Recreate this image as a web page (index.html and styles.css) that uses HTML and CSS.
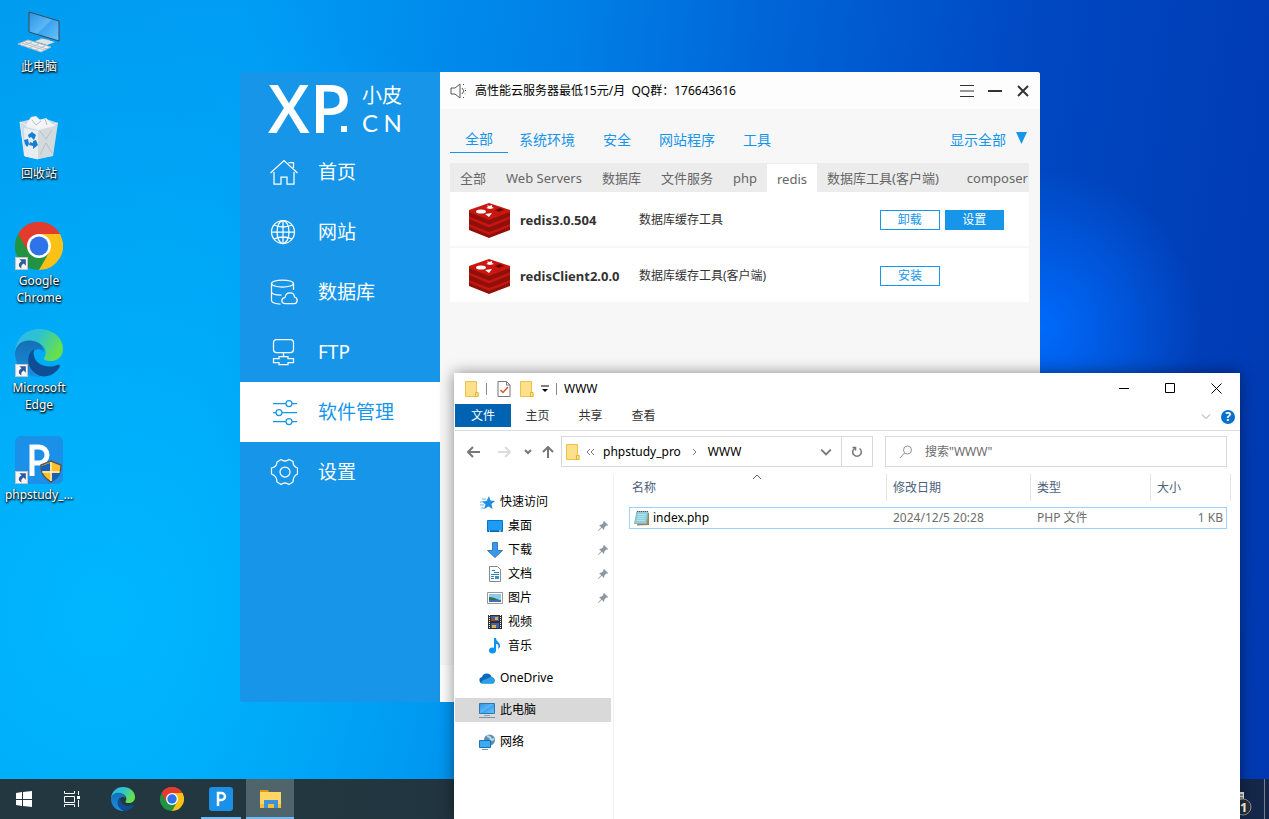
FILE: index.html
```html
<!DOCTYPE html>
<html lang="zh-CN">
<head>
    <meta charset="UTF-8">
    <meta name="viewport" content="width=device-width, initial-scale=1.0">
    <title>WWW</title>
    <link rel="stylesheet" href="styles.css">
</head>
<body>
    <!-- shared icons -->
    <svg class="sprite" aria-hidden="true">
        <defs>
            <linearGradient id="edge-top" x1="0" y1="0" x2="1" y2="0.4">
                <stop offset="0" stop-color="#35b5f0"/>
                <stop offset="0.5" stop-color="#2bc3d0"/>
                <stop offset="1" stop-color="#66e04e"/>
            </linearGradient>
            <linearGradient id="edge-mid" x1="0.3" y1="0" x2="0.3" y2="1">
                <stop offset="0" stop-color="#156fb5"/>
                <stop offset="1" stop-color="#1a8fe3"/>
            </linearGradient>
            <linearGradient id="screen" x1="0" y1="0" x2="1" y2="1">
                <stop offset="0" stop-color="#2a92e2"/>
                <stop offset="0.5" stop-color="#5cb8f7"/>
                <stop offset="0.52" stop-color="#3ba3f1"/>
                <stop offset="1" stop-color="#6cc3fa"/>
            </linearGradient>
        </defs>
        <symbol id="chrome" viewBox="0 0 48 48">
            <path d="M24 24 3.2 12A24 24 0 0 1 44.8 12Z" fill="#e33b2e"/>
            <path d="M24 24 44.8 12A24 24 0 0 1 24 48Z" fill="#fbc116"/>
            <path d="M24 24 24 48A24 24 0 0 1 3.2 12Z" fill="#229342"/>
            <path d="M24 12H44.8L46 15 34.4 30 24 24Z" fill="#fbc116"/>
            <path d="M34.4 30 24 48 18 38 24 30Z" fill="#fbc116"/>
            <path d="M24 48 34.4 30 24 36 13.6 30 13 34Z" fill="#229342"/>
            <path d="M3.2 12 13.6 30 18 14 24 12H44.8A24 24 0 0 0 3.2 12Z" fill="#e33b2e"/>
            <circle cx="24" cy="24" r="12" fill="#fff"/>
            <circle cx="24" cy="24" r="9.4" fill="#2f73ea"/>
        </symbol>
        <symbol id="edge" viewBox="0 0 48 48">
            <path d="M0 23C1 9 11 0 24 0 38 0 48 9 48 20c0 8-6 12-12 12-5 0-8-1-7-3 4-6 1-14-9-16C10 11 3 15 0 23Z" fill="url(#edge-top)"/>
            <path d="M0 24C1 14 10 10 18 12c7 1 11 6 11 11-2-3-7-4-10-1-7 6-6 20 7 26C11 49 0 38 0 24Z" fill="url(#edge-mid)"/>
            <path d="M19 20c-6 4-8 13-3 20 8 11 21 9 28-1 2-3 0-4-2-3-9 4-21 0-23-9-1-3 0-5 0-7Z" fill="#0f4d95"/>
        </symbol>
        <symbol id="shortcut" viewBox="0 0 12 12">
            <path d="M0.5 0.5h11v11h-11Z" fill="#f7f7f7" stroke="#c4c4c4"/>
            <path d="M4 2h6v6L8 6C6 7 5.500 8.500 6 10.500 3 9.500 2.500 6 6 4Z" fill="#2d5c9e"/>
        </symbol>
        <symbol id="folder" viewBox="0 0 14 16">
            <path d="M0.500 0.500h11v11h1.500v4h-12.500Z" fill="#ffe08a" stroke="#e8c24a"/>
            <path d="M10.500 15.500v-4h2.500v4Z" fill="#ffe99f" stroke="#e3b52c"/>
        </symbol>
        <symbol id="redis" viewBox="0 0 41 35">
            <path d="M0 7 20 14 41 7v20L20 35 0 27Z" fill="#8f100a"/>
            <path d="M0 21l20 8 21-8v2.500L20 32 0 23.500Z" fill="#c5160f"/>
            <path d="M0 13.500l20 8 21-8V16L20 24.500 0 16Z" fill="#c5160f"/>
            <path d="M0 7 20 0l21 7v2L20 17 0 9Z" fill="#c9170f"/>
            <path d="m18 2 2 1 3-1v2l2 1-4 1-4-1 2-1ZM16 11l7-1-3 4Z" fill="#fff"/>
            <ellipse cx="12" cy="8.500" rx="5" ry="2" fill="#fff"/>
            <path d="m26 7 5-2 4 2-5 2Z" fill="#6d0b07"/>
        </symbol>
        <symbol id="pin" viewBox="0 0 10 10">
            <path d="m6 0 4 4-1 1-1-.5L6.500 6.500 6 9 3.800 6.800 0.500 10 0 9.500 3.200 6.200 1 4l2.500-.5L5.500 2 5 1Z" fill="#8b98a3"/>
        </symbol>
    </svg>

    <main class="desktop">
        <nav class="shortcuts" aria-label="桌面图标">
            <button class="shortcut">
                <svg class="shortcut-icon" viewBox="0 0 48 48" aria-hidden="true">
                    <path d="m14 4 30 9v20L14 24Z" fill="url(#screen)" stroke="#3b4954"/>
                    <path d="m26 30 9 2v3h-9l-6-1Z" fill="#aeb6bb"/>
                    <path d="m20 33 8-2 12 3-8 3Z" fill="#dfe3e5"/>
                    <path d="m3 36 10-4 23 7-10 5Z" fill="#eef0f1" stroke="#b2babf"/>
                    <path d="m7 35 22 7M10 34l22 7M7 38l10-4M14 40l10-4M20 42l10-4" stroke="#b9c0c5" fill="none"/>
                </svg>
                <span>此电脑</span>
            </button>
            <button class="shortcut">
                <svg class="shortcut-icon" viewBox="0 0 48 48" aria-hidden="true">
                    <path d="m5 7 8-2 18-1 12 4-5 33-15 3-14-3Z" fill="#c9dbe8"/>
                    <path d="m9 13 14 3v28L10 41Z" fill="#e9edf0"/>
                    <path d="m23 16 18-6-4 31-14 3Z" fill="#d2dade"/>
                    <path d="m12 8 4-6 5-1 4 4 6-2 5 5 4 3-17 4-12-3Z" fill="#f4f4f4"/>
                    <path d="m17 5 4 5 5-4M30 4l2 6M25 16l6 8 6-9M25 40l6-12 6 10" stroke="#b5bfc5" fill="none"/>
                    <path d="m5 7 18 8 20-7M5 7l5 34 13 3" stroke="#e8f2f8" fill="none"/>
                    <path d="m13 20 4-3 4 3-2 5-3-3-2 1ZM9 25l4-1 1 5-2 3-2-3ZM18 26l3-1 2 5-5 4v-3l-4-1 1-3 3 1Z" fill="#147fd3"/>
                </svg>
                <span>回收站</span>
            </button>
            <button class="shortcut">
                <svg class="shortcut-icon" viewBox="0 0 48 48" aria-hidden="true">
                    <use href="#chrome"/>
                    <use href="#shortcut" y="35" width="13" height="13"/>
                </svg>
                <span>Google Chrome</span>
            </button>
            <button class="shortcut">
                <svg class="shortcut-icon" viewBox="0 0 48 48" aria-hidden="true">
                    <use href="#edge"/>
                    <use href="#shortcut" y="35" width="13" height="13"/>
                </svg>
                <span>Microsoft Edge</span>
            </button>
            <button class="shortcut">
                <svg class="shortcut-icon" viewBox="0 0 48 48" aria-hidden="true">
                    <rect width="48" height="48" rx="6" fill="#1a90e8"/>
                    <path d="M17 40V11h7a8 8 0 0 1 0 16h-7" stroke="#fff" stroke-width="5" fill="none"/>
                    <path d="m36 25 10 4c0 9-3 13-10 17-7-4-10-8-10-17Z" fill="#ffc02e" stroke="#555" stroke-width="1.500"/>
                    <path d="M35 27v8h-8l-.5-5ZM37 37h8c-1 3-3 6-8 8Z" fill="#1463b8"/>
                    <path d="M36 26v19M27 36h18" stroke="#fff"/>
                    <use href="#shortcut" y="35" width="13" height="13"/>
                </svg>
                <span>phpstudy_...</span>
            </button>
        </nav>

        <section class="panel" aria-label="小皮面板">
            <aside class="sidebar">
                <div class="logo">
                    <span class="logo-mark">XP</span>
                    <span class="logo-name">
                        <span>小皮</span>
                        <span class="logo-cn"><span>C</span><span>N</span></span>
                    </span>
                </div>
                <nav class="menu">
                    <a href="#home">
                        <svg viewBox="0 0 28 28"><path d="M0.500 15 14 2.500 27.500 15M4 14v12h7v-7h6v7h7V14M18.500 4.500h5V10"/></svg>
                        <span>首页</span>
                    </a>
                    <a href="#site">
                        <svg viewBox="0 0 28 28"><circle cx="13" cy="14" r="11.500"/><ellipse cx="13" cy="14" rx="6" ry="11.500"/><path d="M13 2.500v23M1.500 14h23M4 7q9 4 18 0M4 21q9-4 18 0"/></svg>
                        <span>网站</span>
                    </a>
                    <a href="#database">
                        <svg viewBox="0 0 28 28"><ellipse cx="12.500" cy="5.500" rx="11" ry="3.500"/><path d="M1.500 5.500v17c0 2 4 3.500 9 3.500M1.500 14c0 2 4 3 10 3M23.500 5.500V12M14.500 25.500c-4-1-3-6 .5-6 1-6 9-6 9.500-.5 4 1 3 6.500 0 6.500Z"/></svg>
                        <span>数据库</span>
                    </a>
                    <a href="#ftp">
                        <svg viewBox="0 0 28 28"><rect x="3.500" y="1.500" width="20" height="13" rx="3"/><path d="M13.500 14.500v4M9 18.500h9v2h5.500v4H18v2H9v-2H3.500v-4H9Z"/></svg>
                        <span>FTP</span>
                    </a>
                    <a class="active" href="#software">
                        <svg viewBox="0 0 28 28"><path d="M3 5.500h13M22 5.500h5M3 14.500h3M12 14.500h15M3 23.500h13M22 23.500h5"/><circle cx="19" cy="5.500" r="3"/><circle cx="9" cy="14.500" r="3"/><circle cx="19" cy="23.500" r="3"/></svg>
                        <span>软件管理</span>
                    </a>
                    <a href="#settings">
                        <svg viewBox="0 0 28 28"><path d="M11 1.500q4 3 8 0l4 2q0 5 4.500 6.500v6Q23 18 23 24l-4 2.500q-4-3-8 0L7 24Q7 18 1.500 16v-6Q7 9 7 4Z" /><circle cx="15" cy="14" r="5"/></svg>
                        <span>设置</span>
                    </a>
                </nav>
            </aside>

            <div class="panel-main">
                <header class="panel-bar">
                    <svg class="speaker" viewBox="0 0 16 16" aria-hidden="true"><path d="M1 5h4l5-4v14l-5-4H1ZM12 5l2 3-2 3M13 2l1-1M13 14l1 1M15 5v0.500M15 10v0.500M15 7.500h1"/></svg>
                    <span class="notice">高性能云服务器最低15元/月&nbsp; QQ群：176643616</span>
                    <div class="panel-controls">
                        <button aria-label="菜单"><svg viewBox="0 0 14 12"><path d="M0 .5h14M0 6h14M0 11.500h14"/></svg></button>
                        <button aria-label="最小化"><svg viewBox="0 0 14 12"><path d="M0 6h14" stroke-width="2"/></svg></button>
                        <button aria-label="关闭"><svg viewBox="0 0 14 12"><path d="m2 1 10 10M12 1 2 11" stroke-width="2"/></svg></button>
                    </div>
                </header>

                <div class="panel-body">
                    <div class="categories">
                        <a class="active" href="#all">全部</a>
                        <a href="#env">系统环境</a>
                        <a href="#safe">安全</a>
                        <a href="#program">网站程序</a>
                        <a href="#tool">工具</a>
                        <button class="show-all">显示全部
                            <svg viewBox="0 0 11 12" aria-hidden="true"><path d="M0 0h11L5.500 12Z"/></svg>
                        </button>
                    </div>
                    <div class="subtabs">
                        <a href="#sub-all">全部</a>
                        <a href="#web">Web Servers</a>
                        <a href="#db">数据库</a>
                        <a href="#file">文件服务</a>
                        <a href="#php">php</a>
                        <a class="active" href="#redis-list">redis</a>
                        <a href="#dbtool">数据库工具(客户端)</a>
                        <a class="last" href="#composer">composer</a>
                    </div>
                    <ul class="software">
                        <li>
                            <svg class="software-icon" aria-hidden="true"><use href="#redis"/></svg>
                            <strong>redis3.0.504</strong>
                            <span>数据库缓存工具</span>
                            <div class="actions">
                                <button class="btn">卸载</button>
                                <button class="btn primary">设置</button>
                            </div>
                        </li>
                        <li>
                            <svg class="software-icon" aria-hidden="true"><use href="#redis"/></svg>
                            <strong>redisClient2.0.0</strong>
                            <span>数据库缓存工具(客户端)</span>
                            <div class="actions">
                                <button class="btn">安装</button>
                            </div>
                        </li>
                    </ul>
                </div>
                <footer class="panel-footer"></footer>
            </div>
        </section>

        <footer class="taskbar">
            <button class="task" aria-label="开始">
                <svg viewBox="0 0 24 24"><path d="m4 6 6-1v7H4ZM11 5l9-1v8h-9ZM4 13h6v6l-6-1ZM11 13h9v7l-9-1Z" fill="#fff"/></svg>
            </button>
            <button class="task" aria-label="任务视图">
                <svg viewBox="0 0 24 24"><path d="M4.500 4v2.500h10V4M4.500 9.500h10v6h-10ZM4.500 20v-2.500h10V20M18.500 4v4M18.500 13v7" fill="none" stroke="#fff"/><path d="M17 9h3v3h-3Z" fill="#fff"/></svg>
            </button>
            <div class="apps">
                <button class="task" aria-label="Microsoft Edge"><svg><use href="#edge"/></svg></button>
                <button class="task" aria-label="Google Chrome"><svg><use href="#chrome"/></svg></button>
                <button class="task running" aria-label="phpstudy">
                    <svg viewBox="0 0 24 24"><rect width="24" height="24" rx="3" fill="#1a90e8"/><path d="M9 19V6h3.500a3.500 3.500 0 0 1 0 7H9" stroke="#fff" stroke-width="2.500" fill="none"/></svg>
                </button>
                <button class="task current" aria-label="文件资源管理器">
                    <svg viewBox="0 0 24 24"><path d="M2 3h8l1 2h-9Z" fill="#e09b0e"/><path d="M2 5h21v16H2Z" fill="#ffd664"/><path d="M2 17h21v4H2Z" fill="#f3bc46"/><path d="M6 21v-8h14v8h-4v-4h-6v4Z" fill="#3f92d8"/></svg>
                </button>
            </div>
            <button class="tray" aria-label="通知">
                <svg viewBox="0 0 24 28"><path d="M3 4h12v12H3Z" fill="#eee"/><path d="M11 7h3M11 10h3" stroke="#333"/><circle cx="14" cy="19" r="8" fill="#2c3138" stroke="#8d9298"/><text x="11" y="24" class="badge">1</text></svg>
            </button>
        </footer>

        <section class="explorer" aria-label="WWW">
            <header class="titlebar">
                <svg class="folder"><use href="#folder"/></svg>
                <i class="divider"></i>
                <svg class="props" viewBox="0 0 14 16" aria-hidden="true"><path d="M1 .5h8.500L13 4v11.500H1ZM9.500.5V4H13" fill="#fff" stroke="#777"/><path d="m3.500 9 2.500 2.500L11 6" fill="none" stroke="#e2562a" stroke-width="1.500"/></svg>
                <svg class="folder"><use href="#folder"/></svg>
                <svg class="quick" viewBox="0 0 8 8" aria-hidden="true"><path d="M0 1h8" stroke="#000"/><path d="M1 4h6L4 7Z"/></svg>
                <i class="divider"></i>
                <span class="window-title">WWW</span>
                <div class="window-controls">
                    <button aria-label="最小化"><svg viewBox="0 0 11 11"><path d="M0 5.500h10"/></svg></button>
                    <button aria-label="最大化"><svg viewBox="0 0 11 11"><path d="M.5.5h9v9h-9Z"/></svg></button>
                    <button aria-label="关闭"><svg viewBox="0 0 11 11"><path d="m.5.5 10 10M10.500.5l-10 10"/></svg></button>
                </div>
            </header>
            <nav class="ribbon">
                <button class="file">文件</button>
                <button>主页</button>
                <button>共享</button>
                <button>查看</button>
                <div class="ribbon-end">
                    <svg class="expand" viewBox="0 0 10 6" aria-hidden="true"><path d="m1 .5 4 4 4-4"/></svg>
                    <span class="help">?</span>
                </div>
            </nav>
            <div class="toolbar">
                <div class="history">
                    <button aria-label="后退"><svg viewBox="0 0 14 12"><path d="M6 1 1 6l5 5M1 6h12" stroke="#777"/></svg></button>
                    <button aria-label="前进"><svg viewBox="0 0 14 12"><path d="m8 1 5 5-5 5M1 6h12" stroke="#dcdcdc"/></svg></button>
                    <button class="recent" aria-label="最近的位置"><svg viewBox="0 0 14 12"><path d="m4 4 3 3 3-3" stroke="#777"/></svg></button>
                    <button class="up" aria-label="上移"><svg viewBox="0 0 14 12"><path d="M2 6l5-5 5 5M7 1v11" stroke="#777"/></svg></button>
                </div>
                <div class="address">
                    <svg class="folder"><use href="#folder"/></svg>
                    <svg class="chev" viewBox="0 0 10 10"><path d="M5 2 2 5l3 3M9 2 6 5l3 3"/></svg>
                    <a class="crumb" href="#phpstudy">phpstudy_pro</a>
                    <svg class="chev" viewBox="0 0 10 10"><path d="m4 2 3 3-3 3"/></svg>
                    <a class="crumb" href="#www">WWW</a>
                    <button class="drop" aria-label="历史记录"><svg viewBox="0 0 10 10"><path d="m1 3 4 4 4-4"/></svg></button>
                    <button class="refresh" aria-label="刷新"><svg viewBox="0 0 12 12"><path d="M8.500 2.500a4.300 4.300 0 1 1-5 0M1.500 1.500h3v3"/></svg></button>
                </div>
                <label class="search">
                    <svg viewBox="0 0 14 14" aria-hidden="true"><circle cx="8.500" cy="5" r="4"/><path d="M5.500 8 1 13"/></svg>
                    <input type="text" placeholder='搜索"WWW"' aria-label="搜索">
                </label>
            </div>
            <div class="files">
                <nav class="tree">
                    <a href="#quick">
                        <svg viewBox="0 0 16 16"><path d="m10 2 1.500 4.500L16 7l-3.500 3 1 5L9.500 12.500 5 15l1.500-4.500L3 7.500l4.500-.5Z" fill="#1f8fe0"/><path d="M3 5h4M1 8h4M1 11h4M2 14h4" stroke="#64b5ec"/></svg>
                        <span>快速访问</span>
                    </a>
                    <a class="child" href="#desk">
                        <svg viewBox="0 0 16 16"><path d="M.5 2.500h15v11H.5Z" fill="#1c9cf5" stroke="#0873c4"/><path d="M1 13h14" stroke="#0a5d9c"/><path d="M2 13h1M12 13h2" stroke="#fff"/></svg>
                        <span>桌面</span><svg class="pin"><use href="#pin"/></svg>
                    </a>
                    <a class="child" href="#down">
                        <svg viewBox="0 0 16 16"><path d="M5.500.5h5v8h5L8 15.500.5 8.500h5Z" fill="#3c96e4" stroke="#2a7dca"/></svg>
                        <span>下载</span><svg class="pin"><use href="#pin"/></svg>
                    </a>
                    <a class="child" href="#doc">
                        <svg viewBox="0 0 16 16"><path d="M2.500.5h8l3 3v12h-11Z" fill="#fff" stroke="#8a8a8a"/><path d="M5 4.500h3M7 6.500h5M4 8.500h8M4 10.500h3M4 12.500h3" stroke="#2683bd"/><path d="M8 10h4v3H8Z" fill="#428fc3"/></svg>
                        <span>文档</span><svg class="pin"><use href="#pin"/></svg>
                    </a>
                    <a class="child" href="#pic">
                        <svg viewBox="0 0 16 16"><path d="M.5 2.500h15v11H.5Z" fill="#fff" stroke="#999"/><path d="M2 4h12v8H2Z" fill="#8ecbef"/><path d="M2 7q5 0 12 4v1H2Z" fill="#396c60"/><path d="M2 10h12v2H2Z" fill="#3b72a8"/></svg>
                        <span>图片</span><svg class="pin"><use href="#pin"/></svg>
                    </a>
                    <a class="child" href="#video">
                        <svg viewBox="0 0 16 16"><path d="M1 1h14v14H1Z" fill="#303030"/><path d="M2.500 1v14M13.500 1v14" stroke="#fff" stroke-dasharray="1 1"/><path d="M4 2h8v5H4ZM4 9h8v5H4Z" fill="#3b63b5"/><path d="M8 3h3v3H8ZM5 11h4v3H5Z" fill="#e2b23a"/><path d="M4 5h4v2H4Z" fill="#b8402e"/></svg>
                        <span>视频</span>
                    </a>
                    <a class="child" href="#music">
                        <svg viewBox="0 0 16 16"><ellipse cx="5.500" cy="12.500" rx="3.500" ry="3" fill="#0f94ee"/><path d="M7 0h2c0 4 5 4 4 9l-2 2c1-4 0-5-2-5v7H7Z" fill="#0f94ee"/></svg>
                        <span>音乐</span>
                    </a>
                    <a class="group" href="#onedrive">
                        <svg viewBox="0 0 16 16"><path d="M1 12Q-1 8 3 7q1-4 5.500-3.500Q12 4 12.500 7q4 1 3 5-1 2-3 1.500H3Q1.500 13.500 1 12Z" fill="#0e68bd"/><path d="M2 13q1-3 5-4l5-2q4 1 3.500 5-1 2-3 1.500H3Z" fill="#28a0ea"/></svg>
                        <span>OneDrive</span>
                    </a>
                    <a class="group selected" href="#pc">
                        <svg viewBox="0 0 16 16"><path d="M.5 1.500h15v10H.5Z" fill="url(#screen)" stroke="#2c78ac"/><path d="M5 13.500h6" stroke="#8aa0b0"/><path d="M0 15.500h16" stroke="#7893a8"/></svg>
                        <span>此电脑</span>
                    </a>
                    <a class="group" href="#net">
                        <svg viewBox="0 0 16 16"><circle cx="10.500" cy="6" r="5.500" fill="#568fb2"/><path d="M8 2q4 1 4 4l3-1" stroke="#b6dbea" stroke-width="2" fill="none"/><path d="M.5 6.500h11v7H.5Z" fill="#3caaf5" stroke="#216fa8"/><path d="M3 15.500h6" stroke="#7893a8"/></svg>
                        <span>网络</span>
                    </a>
                </nav>
                <div class="listing">
                    <table>
                        <colgroup><col><col class="c-date"><col class="c-type"><col class="c-size"><col class="c-end"></colgroup>
                        <thead>
                            <tr>
                                <th class="sorted">名称<svg viewBox="0 0 10 6" aria-hidden="true"><path d="m1 5 4-4 4 4"/></svg></th>
                                <th>修改日期</th>
                                <th>类型</th>
                                <th>大小</th>
                                <td></td>
                            </tr>
                        </thead>
                        <tbody>
                            <tr>
                                <td class="name">
                                    <div>
                                        <svg viewBox="0 0 16 16" aria-hidden="true"><path d="m4 2 11 1v12l-12 .5Z" fill="#9c8457"/><path d="M3 1.500h11l-1.500 12H.5Z" fill="#8fcfdd" stroke="#8ab4bd"/><path d="M4 4.500h8M3.500 6.500h8M3 8.500h8M3 10.500h8" stroke="#b4e0e8"/><path d="M3 1.500h11" stroke="#555" stroke-dasharray="1 1"/></svg>
                                        index.php
                                    </div>
                                </td>
                                <td>2024/12/5 20:28</td>
                                <td>PHP 文件</td>
                                <td class="size">1 KB</td>
                                <td></td>
                            </tr>
                        </tbody>
                    </table>
                </div>
            </div>
        </section>
    </main>
</body>
</html>
```
FILE: styles.css
```css
* {
    box-sizing: border-box;
}
body {
    margin: 0;
    font-family: "Noto Sans", "Noto Sans CJK SC", sans-serif;
    font-size: 12px;
    line-height: 16px;
    color: #000;
    overflow: hidden;
}
button,
input {
    font: inherit;
    color: inherit;
    border: none;
    background: none;
    padding: 0;
}
a {
    color: inherit;
    text-decoration: none;
}
svg {
    display: block;
    flex: none;
}
.sprite {
    position: absolute;
    width: 0;
    height: 0;
}
.desktop {
    position: relative;
    height: 100vh;
    display: flex;
    flex-direction: column;
    background:
        radial-gradient(circle at 82% 40%, rgba(0, 108, 255, 0.95), rgba(0, 90, 240, 0) 160px),
        radial-gradient(ellipse 45% 80% at 8% 75%, rgba(0, 186, 255, 0.9), rgba(0, 170, 255, 0)),
        linear-gradient(97deg, #009aef 0%, #009cf4 18%, #0080e6 42%, #0062d6 58%, #0048c2 76%, #0038b0 100%);
}

/* desktop shortcuts */
.shortcuts {
    flex: 1;
    display: grid;
    grid-auto-rows: 107px;
    justify-content: start;
    grid-template-columns: 78px;
}
.shortcut {
    display: flex;
    flex-direction: column;
    align-items: center;
    gap: 2px;
    padding-top: 8px;
    line-height: 17px;
    color: #fff;
    text-shadow: 1px 1px 2px #000, 0 1px 2px #000;
}
.shortcut-icon {
    width: 48px;
    height: 48px;
}

/* phpstudy panel */
.panel {
    position: absolute;
    top: 72px;
    left: 240px;
    right: 229px;
    bottom: 117px;
    display: flex;
}
.sidebar {
    flex: 0 0 200px;
    background: #1795e9;
    color: #fff;
    border-radius: 3px 0 0 3px;
}
.logo {
    display: flex;
    align-items: center;
    gap: 11px;
    height: 70px;
    padding-left: 28px;
}
.logo-mark {
    position: relative;
    font-family: "Open Sans", sans-serif;
    font-size: 67px;
    font-weight: 600;
    line-height: 70px;
}
.logo-mark::after {
    content: "";
    position: absolute;
    right: 4px;
    bottom: 10px;
    width: 6px;
    height: 6px;
    background: #fff;
}
.logo-name {
    display: flex;
    flex-direction: column;
    padding-top: 3px;
    font-size: 20px;
    line-height: 27px;
}
.logo-cn {
    display: flex;
    justify-content: space-between;
    font-family: Lato, sans-serif;
    font-size: 24px;
}
.menu a {
    display: flex;
    align-items: center;
    gap: 20px;
    height: 60px;
    padding-left: 30px;
    font-size: 19px;
}
.menu svg {
    width: 28px;
    height: 28px;
    fill: none;
    stroke: currentColor;
    stroke-width: 1.25;
}
.menu .active {
    background: #fff;
    color: #1795e9;
}
.panel-main {
    flex: 1;
    min-width: 0;
    display: flex;
    flex-direction: column;
    background: #f7f7f7;
    border-radius: 0 3px 3px 0;
}
.panel-bar {
    display: flex;
    align-items: center;
    height: 37px;
    padding: 0 10px;
    background: #fdfdfd;
    border-radius: 0 3px 0 0;
}
.speaker {
    width: 16px;
    height: 16px;
    margin-right: 9px;
    fill: none;
    stroke: #555;
}
.notice {
    padding-top: 1px;
}
.panel-controls {
    display: flex;
    gap: 14px;
    margin-left: auto;
}
.panel-controls svg {
    width: 14px;
    height: 12px;
    stroke: #333;
}
.panel-body {
    flex: 1;
    padding: 18px 11px 0 10px;
}
.categories {
    display: flex;
    gap: 28px;
    height: 26px;
    font-size: 14px;
    line-height: 26px;
    color: #1795e9;
}
.categories .active {
    padding: 0 15px;
    margin-right: -17px;
    line-height: 24px;
    border-bottom: 1px solid #1795e9;
}
.show-all {
    display: flex;
    gap: 10px;
    margin-left: auto;
    padding-right: 2px;
}
.show-all svg {
    width: 11px;
    height: 12px;
    margin-top: 5px;
    fill: #1795e9;
}
.subtabs {
    display: flex;
    height: 29px;
    margin-top: 10px;
    overflow: hidden;
    background: #ececec;
    font-size: 13px;
    line-height: 30px;
    white-space: nowrap;
    color: #666;
}
.subtabs a {
    flex: none;
    padding: 0 10px;
}
.subtabs .active {
    margin-top: 1px;
    background: #fff;
}
.subtabs .last {
    padding-left: 18px;
}
.software {
    display: grid;
    gap: 2px;
    margin: 0;
    padding: 0;
    list-style: none;
    color: #333;
}
.software li {
    display: grid;
    grid-template-columns: 41px 109px 1fr 125px;
    column-gap: 10px;
    align-items: center;
    height: 54px;
    padding: 2px 25px 0 19px;
    background: #fff;
}
.software-icon {
    width: 41px;
    height: 35px;
}
.software strong {
    font-size: 13px;
    white-space: nowrap;
}
.actions {
    display: flex;
    gap: 5px;
    margin-left: 1px;
}
.btn {
    width: 60px;
    height: 20px;
    border: 1px solid #1795e9;
    background: #fff;
    color: #1795e9;
}
.btn.primary {
    background: #1795e9;
    color: #fff;
}
.panel-footer {
    height: 37px;
    background: #fdfdfd;
    border-radius: 0 0 3px 0;
}

/* taskbar */
.taskbar {
    display: flex;
    height: 40px;
    background: linear-gradient(to right, #22373f 0%, #22373f 25%, #14274a 100%);
}
.task {
    display: flex;
    align-items: center;
    justify-content: center;
    width: 48px;
}
.task svg {
    width: 24px;
    height: 24px;
}
.apps {
    display: flex;
    gap: 1px;
    margin-left: 3px;
}
.running {
    background: linear-gradient(#76b9ed, #76b9ed) bottom / 40px 2px no-repeat;
}
.current {
    background: linear-gradient(#76b9ed, #76b9ed) bottom / 100% 2px no-repeat #50646c;
}
.tray {
    margin-left: auto;
    margin-right: 4px;
    padding: 5px 11px 0 0;
    border-right: 1px solid #75808f;
}
.tray svg {
    width: 24px;
    height: 28px;
}
.badge {
    font-size: 13px;
    font-weight: bold;
    fill: #fff;
}

/* explorer window */
.explorer {
    position: absolute;
    top: 373px;
    left: 454px;
    right: 29px;
    bottom: 0;
    display: flex;
    flex-direction: column;
    padding-left: 1px;
    background: #fff;
    box-shadow: 0 0 14px rgba(0, 0, 0, 0.45);
}
.titlebar {
    display: flex;
    align-items: center;
    height: 31px;
    padding-left: 10px;
}
.folder {
    width: 14px;
    height: 16px;
}
.divider {
    width: 1px;
    height: 12px;
    margin: 0 10px 0 7px;
    background: #888;
}
.props {
    width: 14px;
    height: 16px;
    margin-right: 9px;
}
.quick {
    width: 8px;
    height: 8px;
    margin-left: 7px;
}
.window-title {
    margin-left: -3px;
}
.window-controls {
    display: flex;
    margin-left: auto;
    margin-right: 1px;
}
.window-controls button {
    display: flex;
    align-items: center;
    justify-content: center;
    width: 46px;
    height: 30px;
}
.window-controls svg {
    width: 11px;
    height: 11px;
    fill: none;
    stroke: #000;
}
.ribbon {
    display: flex;
    align-items: flex-start;
    height: 27px;
    border-bottom: 1px solid #dadbdc;
    color: #333;
}
.ribbon button {
    width: 53px;
    height: 23px;
}
.ribbon .file {
    width: 56px;
    background: #0063b1;
    color: #fff;
}
.ribbon-end {
    display: flex;
    align-items: center;
    gap: 10px;
    height: 25px;
    margin-left: auto;
    padding-right: 5px;
}
.expand {
    width: 10px;
    height: 6px;
    fill: none;
    stroke: #999;
}
.help {
    width: 14px;
    height: 14px;
    border-radius: 50%;
    background: #0670cb;
    color: #fff;
    font-weight: bold;
    line-height: 14px;
    text-align: center;
}
.toolbar {
    display: flex;
    gap: 12px;
    padding: 5px 13px 0 12px;
}
.history {
    display: flex;
    align-items: center;
    gap: 16px;
    width: 82px;
}
.history svg {
    width: 14px;
    height: 12px;
    fill: none;
    stroke-width: 2;
}
.history .recent {
    margin-left: -6px;
}
.history .up {
    margin-left: -10px;
}
.address {
    flex: 1;
    display: flex;
    align-items: center;
    height: 31px;
    padding-left: 4px;
    border: 1px solid #d9d9d9;
}
.chev {
    width: 10px;
    height: 10px;
    margin: 0 8px 0 5px;
    fill: none;
    stroke: #777;
}
.crumb + .chev {
    margin: 0 9px 0 8px;
}
.drop,
.refresh {
    display: flex;
    align-items: center;
    justify-content: center;
    width: 30px;
    height: 29px;
}
.drop {
    margin-left: auto;
}
.refresh {
    width: 31px;
    border-left: 1px solid #d9d9d9;
}
.address button svg {
    width: 12px;
    height: 12px;
    fill: none;
    stroke: #777;
    stroke-width: 1.5;
}
.search {
    flex: 0 0 342px;
    display: flex;
    align-items: center;
    gap: 12px;
    padding: 0 13px;
    border: 1px solid #d9d9d9;
}
.search svg {
    width: 14px;
    height: 14px;
    fill: none;
    stroke: #998f99;
}
.search input {
    flex: 1;
    min-width: 0;
    outline: none;
}
.search input::placeholder {
    color: #6d6d6d;
}
.files {
    flex: 1;
    display: flex;
    min-height: 0;
    padding-top: 7px;
}
.tree {
    flex: 0 0 159px;
    padding: 16px 2px 0 0;
    border-right: 1px solid #f0f0f0;
}
.tree a {
    display: flex;
    align-items: center;
    gap: 5px;
    height: 24px;
    padding-left: 24px;
}
.tree .child {
    padding: 0 3px 0 32px;
}
.tree .group {
    margin-top: 8px;
}
.tree .selected {
    background: #d9d9d9;
}
.tree svg {
    width: 16px;
    height: 16px;
}
.tree .pin {
    width: 10px;
    height: 10px;
    margin-left: auto;
}
.listing {
    flex: 1;
    min-width: 0;
    padding: 0 9px 0 15px;
}
.listing table {
    width: 100%;
    table-layout: fixed;
    border-spacing: 0;
}
.c-date {
    width: 144px;
}
.c-type {
    width: 120px;
}
.c-size {
    width: 77px;
}
.c-end {
    width: 4px;
}
.listing th,
.listing td {
    padding: 0 0 0 6px;
    font-weight: normal;
    text-align: left;
}
.listing th {
    height: 27px;
    border-left: 1px solid #e5e5e5;
    color: #4c607a;
}
.listing th.sorted {
    position: relative;
    padding-left: 3px;
    border-left: none;
}
.sorted svg {
    position: absolute;
    top: 0;
    left: 50%;
    width: 10px;
    height: 6px;
    margin-left: -6px;
    fill: none;
    stroke: #666;
}
.listing thead td {
    padding: 0;
    border-right: 1px solid #e5e5e5;
}
.listing tbody::before {
    content: "";
    display: block;
    height: 6px;
}
.listing tbody td {
    height: 22px;
    padding-left: 7px;
    border: solid #99d1ff;
    border-width: 1px 0;
    color: #6d6d6d;
}
.listing tbody .name {
    padding-left: 4px;
    border-left-width: 1px;
    color: #000;
}
.name div {
    display: flex;
    align-items: center;
    gap: 3px;
}
.name svg {
    width: 16px;
    height: 16px;
}
.listing tbody .size {
    padding-right: 3px;
    border-right-width: 1px;
    text-align: right;
}
.listing tbody td:last-child {
    padding: 0;
    border: none;
}
```
